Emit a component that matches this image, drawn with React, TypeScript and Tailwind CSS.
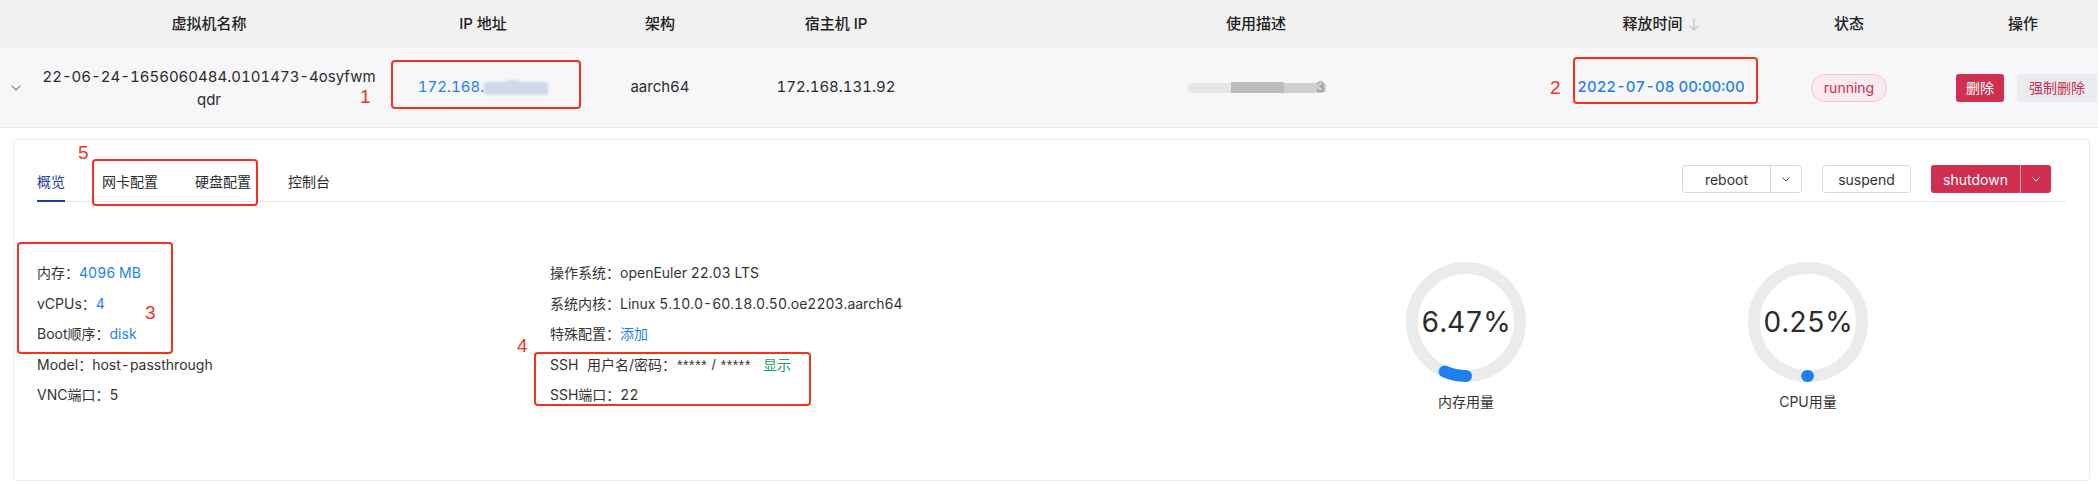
import React from "react";

const Chevron = ({ color = "#666", w = 9 }: { color?: string; w?: number }) => (
  <svg width={w} height={w * 0.6} viewBox="0 0 10 6" fill="none">
    <polyline points="1,1 5,5 9,1" stroke={color} strokeWidth="1.2" strokeLinecap="round" strokeLinejoin="round" />
  </svg>
);

const Ring = ({ pct, value, label }: { pct: number; value: string; label: string }) => {
  const r = 54;
  const c = 2 * Math.PI * r;
  const len = Math.max((pct / 100) * c, 0.01);
  return (
    <div className="flex flex-col items-center">
      <div className="relative w-[120px] h-[120px]">
        <svg width="120" height="120" viewBox="0 0 120 120">
          <circle cx="60" cy="60" r={r} fill="none" stroke="#ebebeb" strokeWidth="12" />
          <circle
            cx="60"
            cy="60"
            r={r}
            fill="none"
            stroke="#1f7ff0"
            strokeWidth="12"
            strokeLinecap="round"
            strokeDasharray={`${len} ${c}`}
            transform="rotate(90 60 60)"
          />
        </svg>
        <div className="absolute inset-0 flex items-center justify-center text-[28px] text-[#2b2b2b]">{value}</div>
      </div>
      <div className="mt-[10px] leading-[20px] text-[14px] text-[#333]">{label}</div>
    </div>
  );
};

const RedBox = ({ cls }: { cls: string }) => (
  <div className={`absolute border-2 border-[#f5301e] rounded-[4px] ${cls}`} />
);

export default function App() {
  return (
    <div className="relative w-[2098px] h-[486px] bg-white overflow-hidden font-['Inter','Noto_Sans_CJK_SC',sans-serif] text-[#333] tabular-nums">
      {/* table header */}
      <div className="grid grid-cols-[40px_338px_210px_144px_208px_632px_178px_198px_150px] h-[48px] bg-[#f1f1f1] items-center text-center text-[15px] font-medium text-[#222]">
        <div />
        <div>虚拟机名称</div>
        <div>IP 地址</div>
        <div>架构</div>
        <div>宿主机 IP</div>
        <div>使用描述</div>
        <div className="flex items-center justify-center gap-[5px]">
          <span>释放时间</span>
          <svg width="12" height="14" viewBox="0 0 12 14" fill="none">
            <line x1="6" y1="1" x2="6" y2="13" stroke="#c4c4c4" strokeWidth="1.2" />
            <polyline points="1.5,8.5 6,13 10.5,8.5" stroke="#c4c4c4" strokeWidth="1.2" fill="none" />
          </svg>
        </div>
        <div>状态</div>
        <div>操作</div>
      </div>

      {/* table row */}
      <div className="grid grid-cols-[40px_338px_210px_144px_208px_632px_178px_198px_150px] h-[80px] bg-[#f7f7f9] border-b border-[#ebebeb] items-center text-center text-[15px] text-[#2b2b2b]">
        <div className="flex justify-center">
          <div className="mr-[8px]">
            <Chevron color="#8c8c8c" w={10} />
          </div>
        </div>
        <div className="leading-[23px] whitespace-nowrap">
          22-06-24-1656060484.0101473-4osyfwm
          <br />
          qdr
        </div>
        <div className="flex items-center justify-center">
          <span className="text-[#1f7fed]">172.168.</span>
          <span className="relative inline-block w-[64px] h-[15px] blur-[1px]">
            <span className="absolute left-0 right-0 bottom-0 h-[13px] bg-[#cfd9ea] rounded-[2px]" />
            <span className="absolute left-[22px] top-0 w-[14px] h-[6px] bg-[#cfd9ea] rounded-full" />
          </span>
        </div>
        <div>aarch64</div>
        <div>172.168.131.92</div>
        <div className="flex justify-center">
          <div className="relative flex items-center h-[14px]">
            <div className="flex items-center blur-[0.6px]">
              <span className="w-[44px] h-[10px] bg-[#e6e6e6] rounded-l-full" />
              <span className="w-[53px] h-[11px] bg-[#bcbcbc]" />
              <span className="w-[42px] h-[10px] bg-[#cfcfcf] rounded-r-sm" />
            </div>
            <span className="absolute right-[0px] top-[-3px] text-[15px] leading-[18px] text-[#555] opacity-50 blur-[0.5px]">3</span>
          </div>
        </div>
        <div className="text-[#1f7fed] font-medium">2022-07-08 00:00:00</div>
        <div className="flex justify-center">
          <span className="h-[28px] w-[76px] flex items-center justify-center rounded-full border border-[#f1c3cf] bg-[#fbebf0] text-[#c8304f] text-[14px]">
            running
          </span>
        </div>
        <div className="flex items-center gap-[13px] pl-[8px] text-[14px]">
          <span className="h-[28px] w-[48px] flex items-center justify-center rounded-[3px] bg-[#d02f50] text-white">删除</span>
          <span className="h-[28px] w-[80px] shrink-0 flex items-center justify-center rounded-[3px] bg-[#ececf0] text-[#c8304f]">
            强制删除
          </span>
        </div>
      </div>

      {/* expanded panel */}
      <div className="mt-[11px] ml-[13px] w-[2077px] h-[342px] border border-[#ececec] rounded-[3px] bg-white">
        <div className="mx-[23px] h-[62px] flex items-end border-b border-[#e8e8e8] text-[14px]">
          <div className="flex gap-[37px] leading-[20px]">
            <div className="pb-[8px] border-b-2 border-[#1b3d9c] text-[#1b3d9c] -mb-px">概览</div>
            <div className="pb-[8px] border-b-2 border-transparent text-[#2b2b2b] -mb-px">网卡配置</div>
            <div className="pb-[8px] border-b-2 border-transparent text-[#2b2b2b] -mb-px">硬盘配置</div>
            <div className="pb-[8px] border-b-2 border-transparent text-[#2b2b2b] -mb-px">控制台</div>
          </div>
          <div className="ml-auto self-start mt-[25px] mr-[15px] flex gap-[20px] text-[14px]">
            <div className="flex h-[28px] border border-[#d9d9d9] rounded-[3px] text-[#333]">
              <div className="w-[88px] flex items-center justify-center border-r border-[#d9d9d9]">reboot</div>
              <div className="w-[30px] flex items-center justify-center">
                <Chevron color="#444" w={8} />
              </div>
            </div>
            <div className="h-[28px] w-[89px] flex items-center justify-center border border-[#d9d9d9] rounded-[3px] text-[#333]">
              suspend
            </div>
            <div className="flex h-[28px] rounded-[3px] bg-[#d02f50] text-white overflow-hidden">
              <div className="w-[90px] flex items-center justify-center border-r border-[#e9a0b0]">shutdown</div>
              <div className="w-[30px] flex items-center justify-center">
                <Chevron color="#fff" w={8} />
              </div>
            </div>
          </div>
        </div>

        <div className="flex pt-[61px] text-[14px] text-[#333]">
          <div className="w-[536px] pl-[23px] flex flex-col gap-[10.5px] leading-[20px]">
            <div>
              内存：<span className="text-[#1f7fed]">4096 MB</span>
            </div>
            <div>
              vCPUs：<span className="text-[#1f7fed]">4</span>
            </div>
            <div>
              Boot顺序：<span className="text-[#1f7fed]">disk</span>
            </div>
            <div>Model：host-passthrough</div>
            <div>VNC端口：5</div>
          </div>
          <div className="w-[745px] flex flex-col gap-[10.5px] leading-[20px]">
            <div>操作系统：openEuler 22.03 LTS</div>
            <div>系统内核：Linux 5.10.0-60.18.0.50.oe2203.aarch64</div>
            <div>
              特殊配置：<span className="text-[#1f7fed]">添加</span>
            </div>
            <div className="flex">
              <span className="w-[27px]">SSH</span>
              <span className="ml-[10px] w-[90px] whitespace-nowrap">用户名/密码：</span>
              <span className="w-[75px] whitespace-nowrap tracking-[0.6px] font-['Liberation_Sans',sans-serif]">***** / *****</span>
              <span className="ml-[11px] text-[#19a15f]">显示</span>
            </div>
            <div>SSH端口：22</div>
          </div>
          <div className="w-[342px] flex justify-center -mt-[1px]">
            <Ring pct={6.47} value="6.47%" label="内存用量" />
          </div>
          <div className="w-[342px] flex justify-center -mt-[1px]">
            <Ring pct={0.25} value="0.25%" label="CPU用量" />
          </div>
        </div>
      </div>

      {/* annotations */}
      <RedBox cls="left-[391px] top-[60px] w-[190px] h-[49px]" />
      <div className="absolute left-[360px] top-[85px] text-[19px] leading-[24px] text-[#f5301e] font-['Liberation_Sans',sans-serif]">1</div>
      <RedBox cls="left-[1573px] top-[57px] w-[185px] h-[47px]" />
      <div className="absolute left-[1550px] top-[76px] text-[19px] leading-[24px] text-[#f5301e] font-['Liberation_Sans',sans-serif]">2</div>
      <RedBox cls="left-[17px] top-[242px] w-[156px] h-[112px]" />
      <div className="absolute left-[145px] top-[301px] text-[19px] leading-[24px] text-[#f5301e] font-['Liberation_Sans',sans-serif]">3</div>
      <RedBox cls="left-[534px] top-[352px] w-[277px] h-[54px]" />
      <div className="absolute left-[517px] top-[334px] text-[19px] leading-[24px] text-[#f5301e] font-['Liberation_Sans',sans-serif]">4</div>
      <RedBox cls="left-[92px] top-[159px] w-[166px] h-[47px]" />
      <div className="absolute left-[78px] top-[141px] text-[19px] leading-[24px] text-[#f5301e] font-['Liberation_Sans',sans-serif]">5</div>
    </div>
  );
}
